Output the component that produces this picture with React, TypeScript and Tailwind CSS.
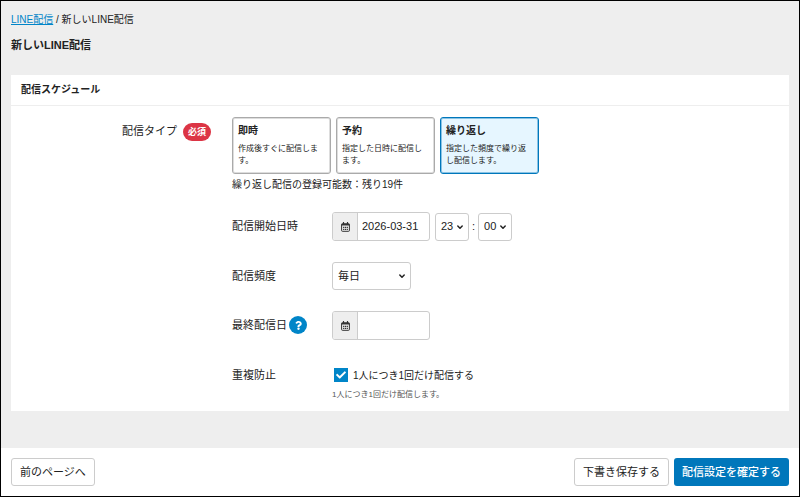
import { useState } from "react";
import type { ReactNode } from "react";
import { FaCheck, FaQuestion } from "react-icons/fa";

const controlBorder = "border border-[#cccccc] rounded-[3px] bg-white";

type DeliveryType = { id: string; title: string; description: string };

const deliveryTypes: DeliveryType[] = [
  { id: "now", title: "即時", description: "作成後すぐに配信します。" },
  { id: "reserved", title: "予約", description: "指定した日時に配信します。" },
  { id: "repeat", title: "繰り返し", description: "指定した頻度で繰り返し配信します。" },
];

function Chevron() {
  return (
    <svg
      viewBox="0 0 8 8"
      className="pointer-events-none absolute right-[5px] top-1/2 size-2 -translate-y-1/2"
      fill="none"
      stroke="#222222"
      strokeWidth="1.5"
      strokeLinecap="round"
      strokeLinejoin="round"
      aria-hidden="true"
    >
      <path d="M1.8 3 4 5.2 6.2 3" />
    </svg>
  );
}

function CalendarIcon() {
  return (
    <svg viewBox="0 0 18 20" className="h-[10px] w-[9px]" fill="none" stroke="#333333" aria-hidden="true">
      <rect x="1.2" y="3.6" width="15.6" height="15" rx="1.6" strokeWidth="2" />
      <path d="M1 5.4h16" strokeWidth="3.6" />
      <path d="M5 .8v3M13 .8v3" strokeWidth="2.4" strokeLinecap="round" />
      <path d="M4.2 10.8h2.4M7.8 10.8h2.4M11.4 10.8h2.4M4.2 14.8h2.4M7.8 14.8h2.4M11.4 14.8h2.4" strokeWidth="2.2" />
    </svg>
  );
}

function SelectBox({ id, label, options, width }: { id: string; label?: string; options: string[]; width: string }) {
  return (
    <span className={`relative inline-block ${width}`}>
      <select
        id={id}
        aria-label={label}
        className={`h-7 w-full appearance-none pl-[5px] text-[11px] ${controlBorder}`}
      >
        {options.map((option) => (
          <option key={option}>{option}</option>
        ))}
      </select>
      <Chevron />
    </span>
  );
}

function DateInput({ id, value }: { id: string; value: string }) {
  return (
    <div className={`flex h-[29px] w-[98px] overflow-hidden ${controlBorder}`}>
      <span className="flex w-[25px] shrink-0 items-center justify-center border-r border-[#cccccc] bg-[#eeeeee]">
        <CalendarIcon />
      </span>
      <input id={id} type="text" defaultValue={value} className="min-w-0 flex-1 px-1 text-[11px] outline-none" />
    </div>
  );
}

function SubRow({ label, htmlFor, help, children }: { label: string; htmlFor: string; help?: boolean; children: ReactNode }) {
  return (
    <div className="flex">
      <div className="flex h-7 w-[100px] shrink-0 items-center gap-[2px] text-[11px]">
        <label htmlFor={htmlFor}>{label}</label>
        {help && (
          <button
            type="button"
            aria-label="ヘルプ"
            className="flex size-[18px] items-center justify-center rounded-full bg-[#0085c8] text-white"
          >
            <FaQuestion size={9} />
          </button>
        )}
      </div>
      {children}
    </div>
  );
}

export default function App() {
  const [selected, setSelected] = useState("repeat");

  return (
    <div
      lang="ja"
      className="flex min-h-screen flex-col border border-black bg-[#eeeeee] font-['Liberation_Sans','Noto_Sans_CJK_JP',sans-serif] text-[#222222]"
    >
      <main className="flex-1 px-[10px] pt-[11px] pb-9">
        <nav className="text-[10px] leading-4">
          <a href="#line" className="text-[#0085c8] underline">
            LINE配信
          </a>{" "}
          / 新しいLINE配信
        </nav>
        <h1 className="mt-[9px] text-[11px] leading-4 font-bold">新しいLINE配信</h1>

        <section className="mt-[22px] bg-white pb-[10px]">
          <h2 className="border-b border-[#eeeeee] px-[10px] text-[10px] leading-[30px] font-bold">
            配信スケジュール
          </h2>
          <div className="flex gap-[21px] pt-[11px]">
            <div className="flex h-[29px] w-[200px] shrink-0 items-center justify-end gap-[6px] text-[11px]">
              <span id="type-label">配信タイプ</span>
              <span className="rounded-full bg-[#dc3545] px-[5px] text-[9px] leading-[18px] font-bold text-white">
                必須
              </span>
            </div>
            <div className="min-w-0 flex-1">
              <div className="flex flex-wrap gap-[5px]" role="group" aria-labelledby="type-label">
                {deliveryTypes.map((type) => (
                  <button
                    key={type.id}
                    type="button"
                    aria-pressed={selected === type.id}
                    onClick={() => setSelected(type.id)}
                    className={`flex h-[57px] w-[99px] flex-col rounded-[3px] border px-[5px] pt-[5px] text-left ${
                      selected === type.id
                        ? "border-[#0077bb] bg-[#e6f6ff] ring-1 ring-[#0077bb]/40 ring-inset"
                        : "border-[#aaaaaa] bg-white ring-1 ring-[#aaaaaa]/40 ring-inset"
                    }`}
                  >
                    <span className="text-[10px] leading-4 font-bold">{type.title}</span>
                    <span className="mt-1 text-[8px] leading-3">{type.description}</span>
                  </button>
                ))}
              </div>
              <p className="mt-[3px] text-[10px] leading-4">繰り返し配信の登録可能数：残り19件</p>

              <div className="mt-[19px] flex flex-col gap-[21px]">
                <SubRow label="配信開始日時" htmlFor="start-date">
                  <div className="flex items-center">
                    <DateInput id="start-date" value="2026-03-31" />
                    <span className="ml-[5px] flex items-center gap-[3px] text-[11px]">
                      <SelectBox id="start-hour" label="時" options={["23", "00", "12"]} width="w-[34px]" />
                      :
                      <SelectBox id="start-minute" label="分" options={["00", "30"]} width="w-[34px]" />
                    </span>
                  </div>
                </SubRow>
                <SubRow label="配信頻度" htmlFor="frequency">
                  <SelectBox id="frequency" options={["毎日", "毎週", "毎月"]} width="w-[79px]" />
                </SubRow>
                <SubRow label="最終配信日" htmlFor="last-date" help>
                  <DateInput id="last-date" value="" />
                </SubRow>
                <SubRow label="重複防止" htmlFor="once">
                  <div>
                    <div className="flex h-7 items-center gap-[5px] pl-[2px]">
                      <span className="relative flex">
                        <input
                          id="once"
                          type="checkbox"
                          defaultChecked
                          className="peer size-[14px] appearance-none border border-[#0085c8] checked:bg-[#0085c8]"
                        />
                        <FaCheck
                          size={10}
                          className="pointer-events-none absolute top-[2px] left-[2px] hidden text-white peer-checked:block"
                        />
                      </span>
                      <label htmlFor="once" className="text-[10px]">
                        1人につき1回だけ配信する
                      </label>
                    </div>
                    <p className="text-[8px] leading-3 text-[#555555]">1人につき1回だけ配信します。</p>
                  </div>
                </SubRow>
              </div>
            </div>
          </div>
        </section>
      </main>

      <footer className="flex items-center gap-[5px] bg-white px-[10px] py-[10px] text-[11px]">
        <button type="button" className={`mr-auto h-7 px-2 ${controlBorder}`}>
          前のページへ
        </button>
        <button type="button" className={`h-7 px-2 ${controlBorder}`}>
          下書き保存する
        </button>
        <button type="button" className="h-7 rounded-[3px] bg-[#0077bb] px-2 font-medium text-white">
          配信設定を確定する
        </button>
      </footer>
    </div>
  );
}
